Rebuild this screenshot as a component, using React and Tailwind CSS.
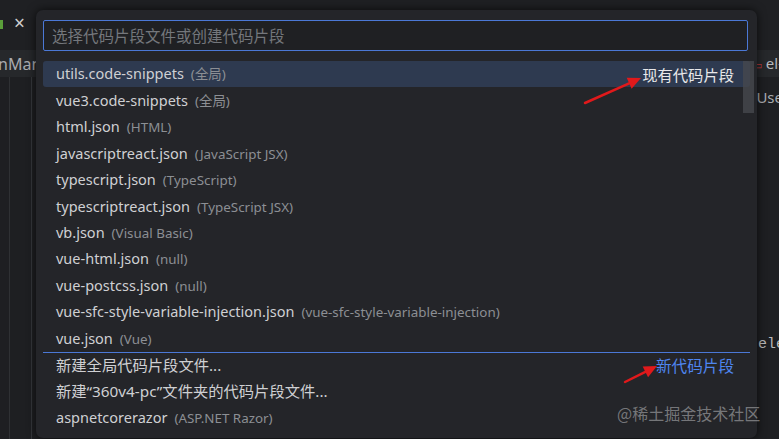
import React from 'react';

const rows = [
  { label: 'utils.code-snippets', desc: '(全局)', active: true, note: '现有代码片段' },
  { label: 'vue3.code-snippets', desc: '(全局)' },
  { label: 'html.json', desc: '(HTML)' },
  { label: 'javascriptreact.json', desc: '(JavaScript JSX)' },
  { label: 'typescript.json', desc: '(TypeScript)' },
  { label: 'typescriptreact.json', desc: '(TypeScript JSX)' },
  { label: 'vb.json', desc: '(Visual Basic)' },
  { label: 'vue-html.json', desc: '(null)' },
  { label: 'vue-postcss.json', desc: '(null)' },
  { label: 'vue-sfc-style-variable-injection.json', desc: '(vue-sfc-style-variable-injection)' },
  { label: 'vue.json', desc: '(Vue)' },
  { label: '新建全局代码片段文件...', sep: true, cjk: true, blueNote: '新代码片段' },
  { label: '新建“360v4-pc”文件夹的代码片段文件...', cjk: true },
  { label: 'aspnetcorerazor', desc: '(ASP.NET Razor)' },
];

const font = { fontFamily: '"Noto Sans", "Noto Sans CJK SC", sans-serif' };
const cjkFont = { fontFamily: '"Noto Sans CJK SC", sans-serif' };

// red annotation arrow
const Arrow = ({ x1, y1, x2, y2 }) => {
  const a = Math.atan2(y2 - y1, x2 - x1);
  const len = 13;
  const w = 6;
  const bx = x2 - len * Math.cos(a);
  const by = y2 - len * Math.sin(a);
  const p1 = `${bx + w * Math.sin(a)},${by - w * Math.cos(a)}`;
  const p2 = `${bx - w * Math.sin(a)},${by + w * Math.cos(a)}`;
  return (
    <g>
      <line x1={x1} y1={y1} x2={bx} y2={by} stroke="#e0191b" strokeWidth="2.5" strokeLinecap="round" />
      <polygon points={`${x2},${y2} ${p1} ${p2}`} fill="#e0191b" />
    </g>
  );
};

export default function App() {
  return (
    <div className="relative w-[779px] h-[439px] overflow-hidden bg-[#1e1f22] text-[#c9cacd]" style={font}>
      {/* editor behind */}
      <div className="flex flex-col h-full">
        <div className="h-[50px] flex items-center bg-[#1f2023]">
          <div className="w-[3px] h-[9px] bg-[#5a9e3a] mt-[-2px]" />
          <span className="ml-[11px] text-[19px] leading-none text-[#d0d0d0] mt-[-3px]">×</span>
        </div>
        <div className="h-[27px] flex items-center justify-between bg-[#26282b]">
          <span className="text-[16px] text-[#a9abaf] ml-[-2px]">nMan</span>
          <span className="text-[15px] text-[#b5b7bb] mr-[-4px] whitespace-nowrap">
            <span className="text-[#c03a3a] text-[11px]">▭</span> el-
          </span>
        </div>
        <div className="flex-1 flex">
          <div className="w-[10px] border-r border-[#2f3134]" />
          <div className="w-[22px] border-r border-[#35373b]" />
          <div className="flex-1 flex flex-col items-end pt-[9px]">
            <span className="text-[15px] text-[#a9abaf] mr-[-4px] whitespace-nowrap">tUse</span>
            <span className="mt-[225px] text-[15px] text-[#b9b9b9] mr-[-6px]" style={{ fontFamily: '"Liberation Mono", monospace' }}>ele</span>
          </div>
        </div>
      </div>

      {/* quick pick overlay */}
      <div className="absolute left-[36px] top-[10px] w-[721px] h-[428px] rounded-[7px] bg-[#242529] shadow-[0_0_10px_rgba(0,0,0,0.7)] pl-[7px] pr-[9px] pt-[10px]">
        <div className="h-[31px] rounded-[2px] border border-[#4b78d6] bg-[#1f2023] flex items-center pl-[8px]">
          <span className="text-[15.5px] text-[#74777c] leading-none" style={cjkFont}>选择代码片段文件或创建代码片段</span>
        </div>
        <div className="relative mt-[10px] w-[707px]">
          {rows.map((r, i) => (
            <div
              key={i}
              className={`h-[26.45px] flex items-center justify-between pl-[13px] pr-[16px] ${r.active ? 'bg-[#2e3a50] rounded-[3px]' : ''} ${r.sep ? 'border-t border-[#4b78d6]' : ''}`}
            >
              <div className="flex items-baseline whitespace-nowrap">
                <span className={`${r.cjk ? 'text-[15.3px]' : 'text-[14.5px]'} text-[#cfd0d3]`}>{r.label}</span>
                {r.desc && <span className="ml-[7px] text-[13.4px] text-[#8c8f94]">{r.desc}</span>}
              </div>
              {r.note && <span className="text-[15.3px] text-[#e8e8ea]" style={cjkFont}>{r.note}</span>}
              {r.blueNote && <span className="text-[15.6px] text-[#4f86f0]" style={cjkFont}>{r.blueNote}</span>}
            </div>
          ))}
          {/* scrollbar */}
          <div className="absolute right-[-4px] top-0 w-[11px] h-[52px] bg-[#46484d]/80" />
        </div>
      </div>

      {/* annotations */}
      <svg className="absolute left-0 top-0 pointer-events-none" width="779" height="439">
        <Arrow x1={585} y1={103} x2={641} y2={78} />
        <Arrow x1={625} y1={382} x2={657} y2={366} />
      </svg>
      <span className="absolute left-[617px] top-[401px] text-[16px] text-[#8c8d90]/80" style={cjkFont}>@稀土掘金技术社区</span>
    </div>
  );
}
